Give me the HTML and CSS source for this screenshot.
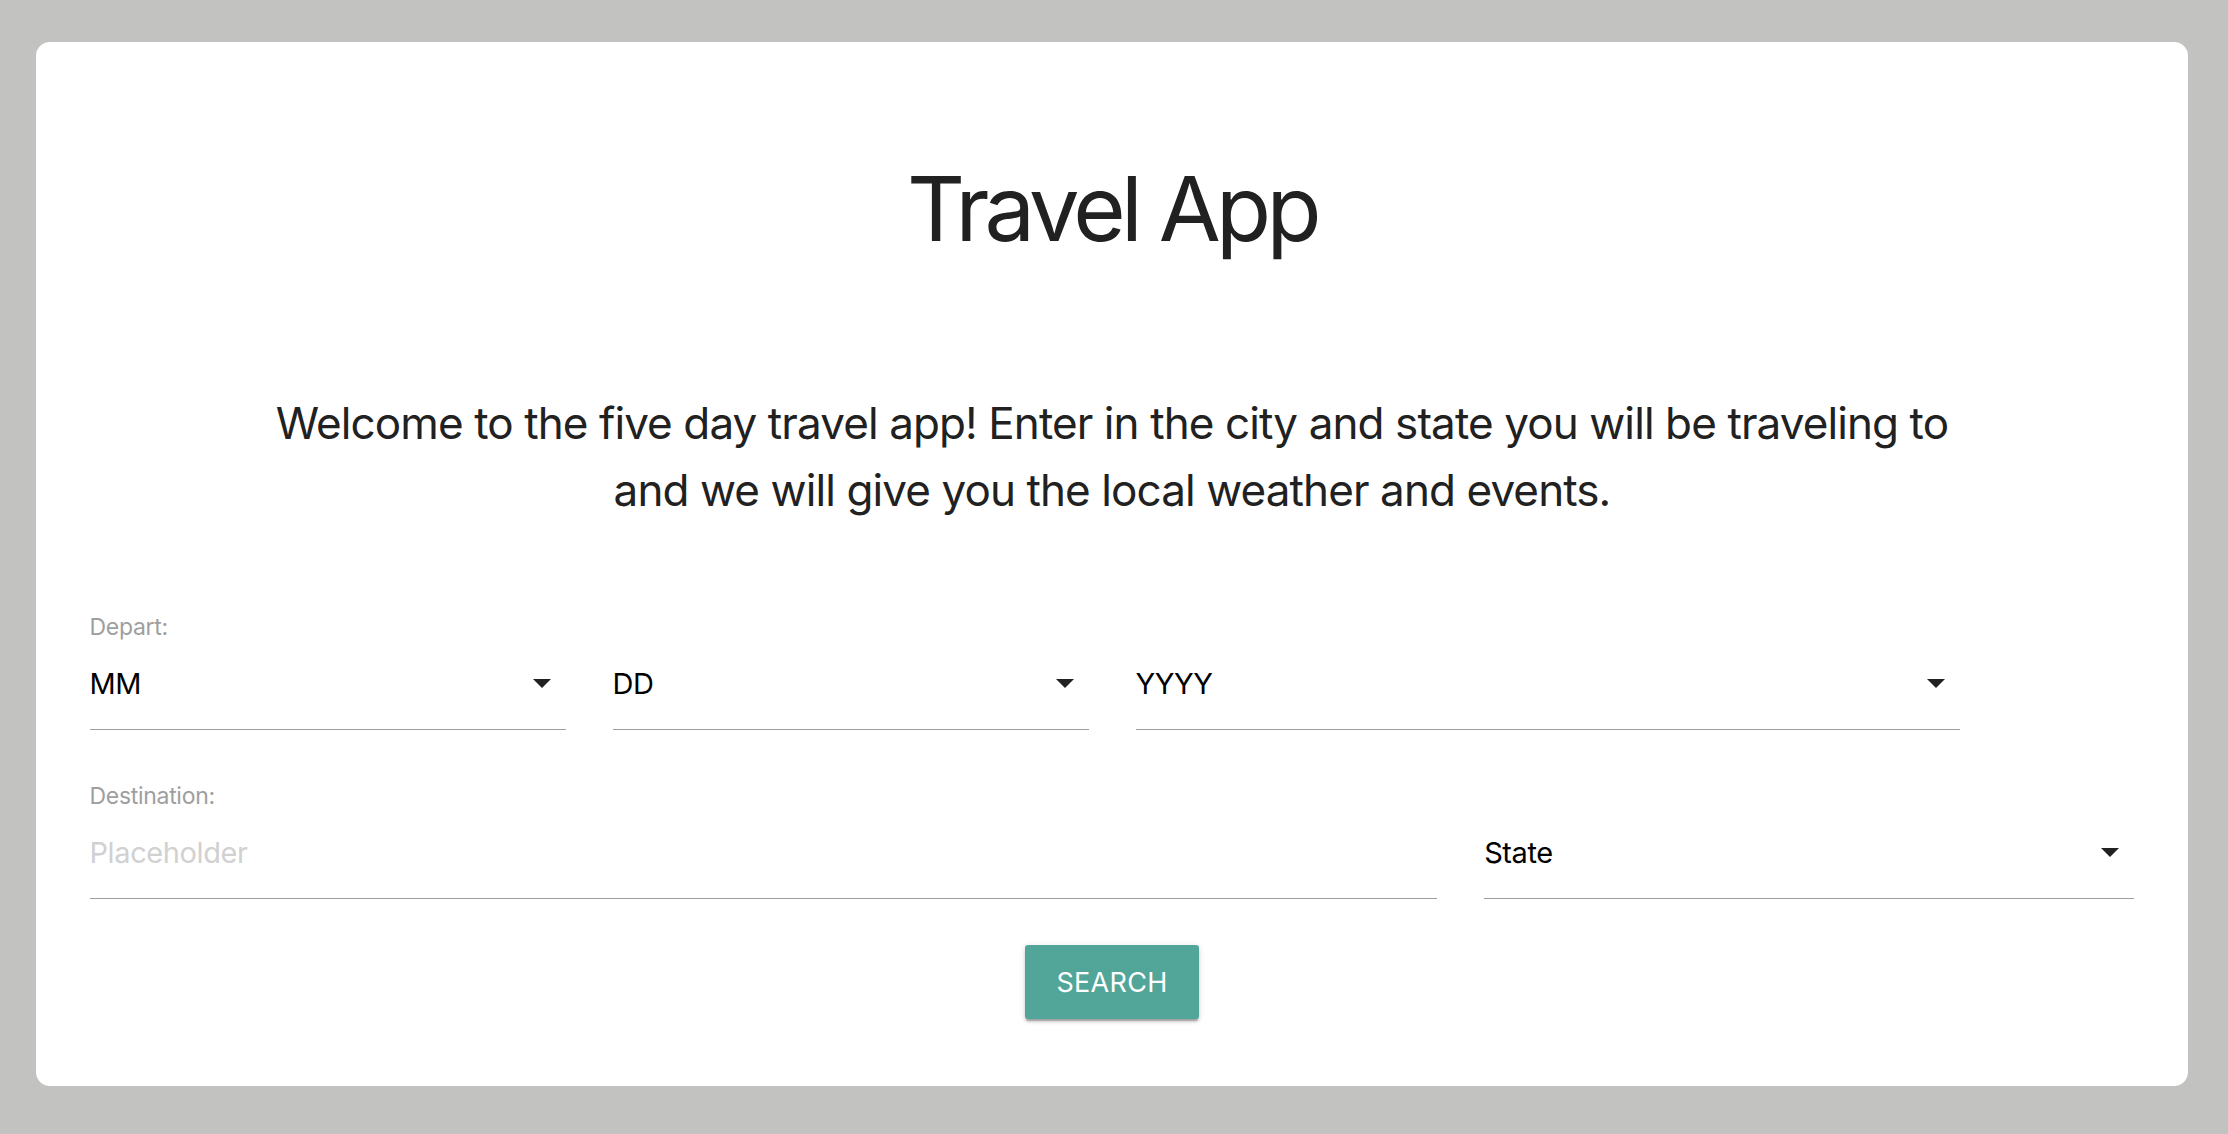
FILE: index.html
```html
<!DOCTYPE html>
<html lang="en">
<head>
<meta charset="utf-8">
<title>Travel App</title>
<link rel="stylesheet" href="styles.css">
</head>
<body>
<main class="card">
  <h1 class="title">Travel App</h1>
  <p class="intro">Welcome to the five day travel app! Enter in the city and state you will be traveling to and we will give you the local weather and events.</p>
  <form class="form">
    <div class="row">
      <div class="col s12"><label class="field-label">Depart:</label></div>
      <div class="col s3">
        <div class="select"><span class="select-value">MM</span><svg class="caret" viewBox="0 0 16 8"><path d="M0 0h16L8 8z"/></svg></div>
      </div>
      <div class="col s3">
        <div class="select"><span class="select-value">DD</span><svg class="caret" viewBox="0 0 16 8"><path d="M0 0h16L8 8z"/></svg></div>
      </div>
      <div class="col s5">
        <div class="select"><span class="select-value">YYYY</span><svg class="caret" viewBox="0 0 16 8"><path d="M0 0h16L8 8z"/></svg></div>
      </div>
    </div>
    <div class="row row-dest">
      <div class="col s12"><label class="field-label">Destination:</label></div>
      <div class="col s8">
        <input class="text-input" type="text" placeholder="Placeholder">
      </div>
      <div class="col s4">
        <div class="select"><span class="select-value">State</span><svg class="caret" viewBox="0 0 16 8"><path d="M0 0h16L8 8z"/></svg></div>
      </div>
    </div>
    <div class="actions">
      <button class="btn" type="button">Search</button>
    </div>
  </form>
</main>
</body>
</html>
```

FILE: styles.css
```css
html, body {
  margin: 0;
  padding: 0;
}
body {
  background: #c2c2c1;
  padding: 42px 40px 48px 36px;
  font-family: Inter, "Liberation Sans", sans-serif;
  color: #212121;
}
.card {
  background: #ffffff;
  border-radius: 14px;
  padding: 117px 30px 68px 30px;
  height: 1044px;
  box-sizing: border-box;
}
.title {
  margin: 0;
  text-align: center;
  font-size: 90px;
  line-height: 100px;
  font-weight: 400;
  letter-spacing: -4.7px;
  color: #212121;
}
.intro {
  margin: 131px auto 0;
  max-width: 1720px;
  text-align: center;
  font-size: 44px;
  line-height: 67px;
  font-weight: 400;
  letter-spacing: -0.9px;
  color: #212121;
}
.form {
  margin-top: 91px;
}
.row {
  display: flex;
  flex-wrap: wrap;
}
.row-dest {
  margin-top: 54px;
}
.col {
  box-sizing: border-box;
  padding: 0 23.5px;
}
.s12 { width: 100%; }
.s3 { width: 25%; }
.s4 { width: 33.3333%; }
.s5 { width: 41.6667%; }
.s8 { width: 66.6667%; }
.field-label {
  display: block;
  font-size: 23px;
  line-height: 24px;
  letter-spacing: -0.3px;
  color: #9e9e9e;
  margin-bottom: 12px;
}
.select {
  display: flex;
  align-items: center;
  justify-content: space-between;
  height: 64px;
  padding-bottom: 14px;
  border-bottom: 1px solid #9e9e9e;
}
.select-value {
  font-size: 29px;
  letter-spacing: -0.4px;
  color: #000000;
}
.caret {
  width: 18px;
  height: 9px;
  margin-right: 15px;
  fill: #212121;
}
.text-input {
  display: block;
  width: 100%;
  box-sizing: content-box;
  height: 64px;
  padding: 0 0 14px 0;
  margin: 0;
  border: none;
  border-bottom: 1px solid #9e9e9e;
  outline: none;
  font-family: Inter, "Liberation Sans", sans-serif;
  font-size: 29px;
  letter-spacing: -0.4px;
  color: #000000;
  background: transparent;
}
.text-input::placeholder {
  color: #d1d1d1;
}
.actions {
  display: flex;
  justify-content: center;
  margin-top: 46px;
}
.btn {
  height: 74px;
  padding: 0 31px;
  border: none;
  border-radius: 3px;
  background: #51a599;
  color: #ffffff;
  font-family: Inter, "Liberation Sans", sans-serif;
  font-size: 27px;
  letter-spacing: 0.3px;
  text-transform: uppercase;
  box-shadow: 0 3px 3px 0 rgba(0,0,0,0.14), 0 1px 7px 0 rgba(0,0,0,0.12), 0 3px 1px -1px rgba(0,0,0,0.2);
  cursor: pointer;
}
```
